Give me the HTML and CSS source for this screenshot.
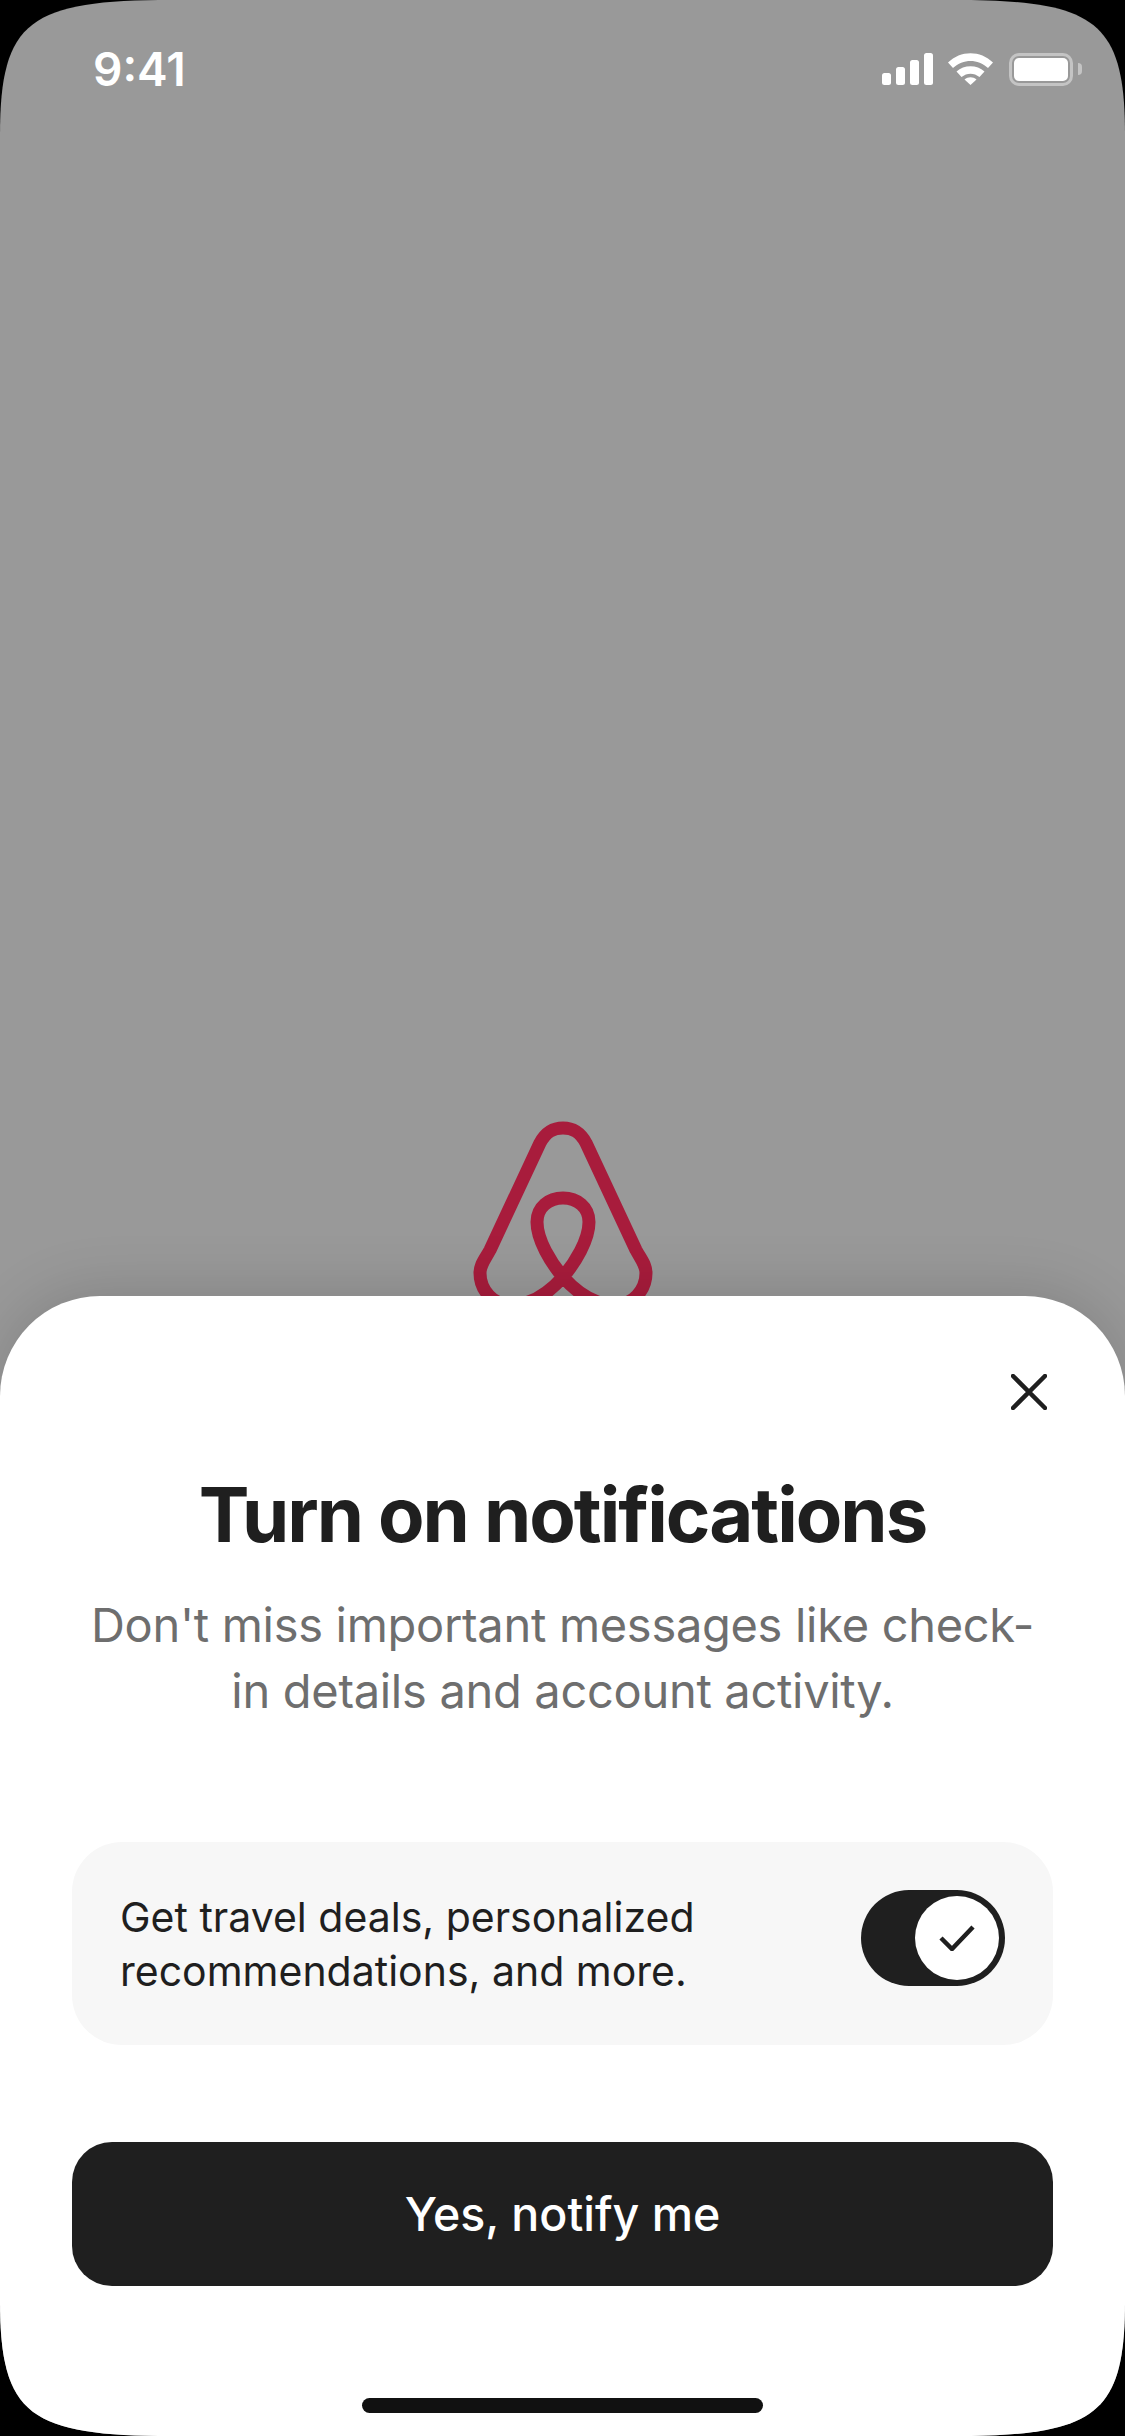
FILE: index.html
```html
<!DOCTYPE html>
<html lang="en">
<head>
    <meta charset="UTF-8">
    <meta name="viewport" content="width=device-width, initial-scale=1.0">
    <title>Turn on notifications</title>
    <link rel="stylesheet" href="styles.css">
</head>
<body>
    <div class="phone">
        <div class="backdrop">
            <div class="status-bar">
                <span class="status-time">9:41</span>
                <div class="status-icons">
                    <svg class="icon-signal" viewBox="0 0 51 32" width="51" height="32" fill="#fff">
                        <rect x="0" y="20" width="9" height="12" rx="2.5"/>
                        <rect x="14" y="14" width="9" height="18" rx="2.5"/>
                        <rect x="28" y="7" width="9" height="25" rx="2.5"/>
                        <rect x="42" y="0" width="9" height="32" rx="2.5"/>
                    </svg>
                    <svg class="icon-wifi" viewBox="0 0 45 32" width="45" height="32" fill="#fff">
                        <path d="M0 9.5 C12.5 -3 32.5 -3 45 9.5 L40 15 C30 5.5 15 5.5 5 15 Z"/>
                        <path d="M8.5 18.5 C16 11.5 29 11.5 36.5 18.5 L31.5 24 C26 19.5 19 19.5 13.5 24 Z"/>
                        <path d="M22.5 32 L16.5 26.5 C20 23.5 25 23.5 28.5 26.5 Z"/>
                    </svg>
                    <div class="battery">
                        <div class="battery-level"></div>
                    </div>
                    <div class="battery-cap"></div>
                </div>
            </div>
            <svg class="logo" viewBox="0 0 200 200" width="200" height="200" fill="none" stroke="#a81c3c" stroke-width="13">
                <path d="M100 13 C 90 13 83 17 77 28 L 27 135 C 21 146 17 150 17 158 C 17 175 30 190 48 190 C 66 190 84 180 100 162 C 112 148 126 125 126 107 C 126 92 114 83 100 83 C 86 83 74 92 74 107 C 74 125 88 148 100 162 C 116 180 134 190 152 190 C 170 190 183 175 183 158 C 183 150 179 146 173 135 L 123 28 C 117 17 110 13 100 13 Z"/>
            </svg>
        </div>

        <div class="sheet">
            <div class="sheet-top">
                <svg class="close-icon" viewBox="0 0 36 36" width="36" height="36" fill="none" stroke="#1f1f1f" stroke-width="4.5" stroke-linecap="round">
                    <path d="M2 2 L34 34 M34 2 L2 34"/>
                </svg>
            </div>
            <h1 class="title">Turn on notifications</h1>
            <p class="subtitle">Don't miss important messages like check-<br>in details and account activity.</p>

            <div class="option-card">
                <div class="option-text">Get travel deals, personalized<br>recommendations, and more.</div>
                <div class="toggle">
                    <div class="toggle-knob">
                        <svg viewBox="0 0 36 26" width="36" height="26" fill="none" stroke="#1f1f1f" stroke-width="4.5">
                            <path d="M2 13 L13 24 L34 2"/>
                        </svg>
                    </div>
                </div>
            </div>

            <button class="notify-button">Yes, notify me</button>
            <div class="home-indicator"></div>
        </div>
    </div>
</body>
</html>
```

FILE: styles.css
```css
html, body {
    margin: 0;
    padding: 0;
}
body {
    width: 1125px;
    height: 2436px;
    background-color: #000;
    font-family: Inter, "Noto Sans", sans-serif;
    overflow: hidden;
}
/* screen mask: tighter than a plain border-radius */
.phone {
    width: 1125px;
    height: 2436px;
    display: flex;
    flex-direction: column;
    overflow: hidden;
    background-color: #999;
    clip-path: path("M172 0 L953 0 C1095 0 1125 20 1125 135 L1125 2301 C1125 2416 1095 2436 953 2436 L172 2436 C30 2436 0 2416 0 2301 L0 135 C0 20 30 0 172 0 Z");
}
.backdrop {
    height: 1296px;
    flex-shrink: 0;
    display: flex;
    flex-direction: column;
    align-items: center;
    justify-content: space-between;
    overflow: hidden;
}
.status-bar {
    width: 100%;
    box-sizing: border-box;
    padding: 46px 43px 0 93px;
    display: flex;
    justify-content: space-between;
    align-items: center;
}
.status-time {
    font-size: 46px;
    font-weight: 600;
    line-height: 46px;
    color: #fff;
}
.status-icons {
    display: flex;
    align-items: center;
}
.icon-signal {
    margin-right: 15px;
}
.icon-wifi {
    margin-right: 16px;
}
.battery {
    width: 64px;
    height: 33px;
    box-sizing: border-box;
    padding: 2px;
    border: 3px solid #c4c4c4;
    border-radius: 10px;
}
.battery-level {
    height: 100%;
    background-color: #fff;
    border-radius: 5px;
}
.battery-cap {
    width: 4px;
    height: 12px;
    margin-left: 5px;
    background-color: #c4c4c4;
    border-radius: 0 4px 4px 0;
}
.logo {
    flex-shrink: 0;
    margin-bottom: -19px;
}
.sheet {
    flex: 1;
    display: flex;
    flex-direction: column;
    background-color: #fff;
    border-radius: 100px 100px 0 0;
    box-shadow: 0 -6px 60px rgba(0, 0, 0, 0.14);
    position: relative;
}
.sheet-top {
    display: flex;
    justify-content: flex-end;
    padding: 78px 78px 0 0;
}
.close-icon {
    display: block;
}
.title {
    margin: 59px 0 0;
    font-size: 76px;
    font-weight: 700;
    line-height: 90px;
    letter-spacing: -2px;
    text-align: center;
    color: #1f1f1f;
}
.subtitle {
    margin: 33px 0 0;
    font-size: 47px;
    font-weight: 400;
    line-height: 66px;
    letter-spacing: -0.3px;
    text-align: center;
    color: #6e6e6e;
}
.option-card {
    margin: 118px 72px 0;
    height: 203px;
    box-sizing: border-box;
    padding: 0 48px;
    display: flex;
    align-items: center;
    justify-content: space-between;
    background-color: #f7f7f7;
    border-radius: 50px;
}
.option-text {
    font-size: 41px;
    line-height: 54px;
    color: #1f1f1f;
}
.toggle {
    width: 144px;
    height: 96px;
    margin-bottom: 11px;
    box-sizing: border-box;
    padding: 6px;
    display: flex;
    justify-content: flex-end;
    background-color: #1f1f1f;
    border-radius: 48px;
}
.toggle-knob {
    width: 84px;
    height: 84px;
    display: flex;
    align-items: center;
    justify-content: center;
    background-color: #fff;
    border-radius: 50%;
}
.notify-button {
    margin: 97px 72px 0;
    height: 144px;
    border: none;
    border-radius: 40px;
    background-color: #1f1f1f;
    color: #fff;
    font-family: Inter, "Noto Sans", sans-serif;
    font-size: 46.5px;
    font-weight: 550;
    cursor: pointer;
}
.home-indicator {
    width: 401px;
    height: 15px;
    margin: 112px auto 0;
    background-color: #111;
    border-radius: 8px;
}
```
